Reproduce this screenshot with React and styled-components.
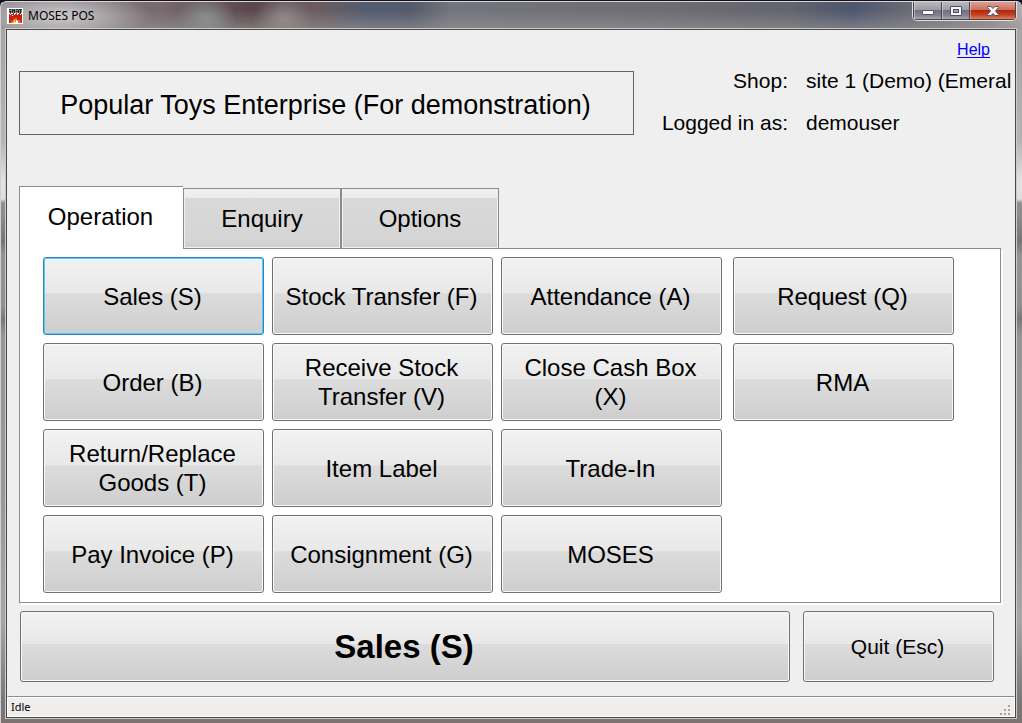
import { useState } from "react";
import styled, { createGlobalStyle, css } from "styled-components";

const TABS = ["Operation", "Enquiry", "Options"];

const MAIN_ACTIONS = [
    "Sales (S)",
    "Stock Transfer (F)",
    "Attendance (A)",
    "Order (B)",
    "Receive Stock Transfer (V)",
    "Close Cash Box (X)",
    "Return/Replace Goods (T)",
    "Item Label",
    "Trade-In",
    "Pay Invoice (P)",
    "Consignment (G)",
    "MOSES",
];

const SIDE_ACTIONS = ["Request (Q)", "RMA"];

const App = () => {
    const [activeTab, setActiveTab] = useState("Operation");
    const [selected, setSelected] = useState("Sales (S)");

    return (
        <Window>
            <GlobalStyle />
            <TitleBar>
                <AppIcon />
                <WindowTitle>MOSES POS</WindowTitle>
                <Captions />
            </TitleBar>
            <Client>
                <Header>
                    <ShopName>
                        Popular Toys Enterprise (For demonstration)
                    </ShopName>
                    <Info>
                        <HelpLink href="#help">Help</HelpLink>
                        <Details>
                            <dt>Shop:</dt>
                            <dd>site 1 (Demo) (Emeral</dd>
                            <dt>Logged in as:</dt>
                            <dd>demouser</dd>
                        </Details>
                    </Info>
                </Header>
                <Tabs role="tablist">
                    {TABS.map((tab) => (
                        <Tab
                            key={tab}
                            role="tab"
                            aria-selected={tab === activeTab}
                            $active={tab === activeTab}
                            onClick={() => setActiveTab(tab)}
                        >
                            {tab}
                        </Tab>
                    ))}
                </Tabs>
                <Panel role="tabpanel">
                    <MainActions>
                        {MAIN_ACTIONS.map((action) => (
                            <ActionButton
                                key={action}
                                $selected={action === selected}
                                onClick={() => setSelected(action)}
                            >
                                {action}
                            </ActionButton>
                        ))}
                    </MainActions>
                    <SideActions>
                        {SIDE_ACTIONS.map((action) => (
                            <ActionButton
                                key={action}
                                $selected={action === selected}
                                onClick={() => setSelected(action)}
                            >
                                {action}
                            </ActionButton>
                        ))}
                    </SideActions>
                </Panel>
                <Footer>
                    <RunButton>{selected}</RunButton>
                    <QuitButton>Quit (Esc)</QuitButton>
                </Footer>
                <StatusBar>
                    Idle
                    <Grip />
                </StatusBar>
            </Client>
        </Window>
    );
};

const AppIcon = () => (
    <svg width="16" height="16" viewBox="0 0 16 16" aria-hidden="true">
        <rect width="16" height="16" fill="#fff" />
        <path d="M2 1h13v4h-13z" fill="#8b8b8b" />
        <path
            d="M2 1h2v1h-2zM5 1h1v4h-1zM7 1h1v4h-1zM9 1h2v1h-2zM12 1h3v1h-3zM2 3h2v1h-2zM3 4h1v1h-1zM6 2h1v1h-1zM9 3h2v1h-2zM11 2h1v3h-1zM13 2h1v3h-1z"
            fill="#222"
        />
        <path d="M2 6h13v9h-13z" fill="#c62412" />
        <path
            d="M3 5h1v1h-1zM6 5h1v1h-1zM9 5h1v1h-1zM12 5h2v1h-2z"
            fill="#a33"
        />
        <path
            d="M3 6h1v1h-1zM5 7h1v1h-1zM7 6h1v1h-1zM10 6h1v1h-1zM13 6h1v1h-1z"
            fill="#fff"
        />
        <path d="M4 15v-2h2v-2h2v-1h2v2h3v2h1v1z" fill="#f0692c" />
        <path d="M6 15v-1h1v-2h1v2h3v1z" fill="#ffd9a0" />
        <path d="M9 12h1v1h1v2h-2z" fill="#fff" />
    </svg>
);

const Captions = () => (
    <CaptionGroup>
        <CaptionButton aria-label="Minimize">
            <svg width="14" height="12" viewBox="0 0 14 12">
                <rect
                    x="1.5"
                    y="5.5"
                    width="11"
                    height="4"
                    rx="0.5"
                    fill="#fff"
                    stroke="#525469"
                />
            </svg>
        </CaptionButton>
        <CaptionButton aria-label="Maximize">
            <svg width="14" height="12" viewBox="0 0 14 12">
                <rect
                    x="1.5"
                    y="1.5"
                    width="11"
                    height="9"
                    rx="0.5"
                    fill="#f5f5f5"
                    stroke="#4c4e62"
                />
                <rect
                    x="4.5"
                    y="4.5"
                    width="5"
                    height="3"
                    fill="#a5a4ae"
                    stroke="#4c4e62"
                />
            </svg>
        </CaptionButton>
        <CaptionButton $close aria-label="Close">
            <svg width="14" height="12" viewBox="0 0 14 12">
                <path
                    d="M1.5 1.5h3.5l2 2 2-2h3.5v1l-3 3.5 3 3.5v1h-3.5l-2-2-2 2h-3.5v-1l3-3.5-3-3.5z"
                    fill="#f7f7f7"
                    stroke="#53546a"
                />
            </svg>
        </CaptionButton>
    </CaptionGroup>
);

const Grip = () => (
    <GripIcon width="11" height="11" viewBox="0 0 11 11" aria-hidden="true">
        <path
            d="M8 0h2v2h-2zM4 4h2v2h-2zM8 4h2v2h-2zM0 8h2v2h-2zM4 8h2v2h-2zM8 8h2v2h-2z"
            fill="#a5a2a1"
        />
    </GripIcon>
);

const GlobalStyle = createGlobalStyle`
    * {
        box-sizing: border-box;
    }

    body {
        margin: 0;
        background-color: #15101a;
        color: #000;
        font-family: "Liberation Sans", Arial, sans-serif;
    }

    button {
        margin: 0;
        padding: 0;
        color: inherit;
        font-family: inherit;
    }
`;

const Window = styled.div`
    display: flex;
    flex-direction: column;
    min-height: 100vh;
    padding: 0 6px 5px 5px;
    border: 1px solid #d3d0d3;
    border-top: 1px solid #17121a;
    border-right: 0;
    border-bottom: 0;
    border-radius: 7px 7px 0 0;
    background: linear-gradient(
        #a8a6a8 0,
        #a9a9a9 60px,
        #b4b6b5 140px,
        #e2e2e2 180px,
        #dedede 198px,
        #8e8f8f 202px,
        #8b8c8c 215px,
        #747575 240px,
        #939594 255px,
        #8f9190 305px,
        #787979 318px,
        #959796 335px,
        #989a99 500px,
        #a6a6a6 620px,
        #777878 700px,
        #7d7370
    );
`;

const TitleBar = styled.header`
    display: flex;
    align-items: center;
    height: 28px;
    margin: 0 -6px 0 -5px;
    padding-left: 6px;
    border-top: 1px solid #d9d5dc;
    border-radius: 6px 6px 0 0;
    background: radial-gradient(
            ellipse 90px 26px at 60px 14px,
            rgba(205, 203, 205, 0.9) 10%,
            transparent
        ),
        radial-gradient(
            ellipse 30px 24px at 205px 17px,
            rgba(143, 150, 148, 0.8) 10%,
            transparent
        ),
        radial-gradient(
            ellipse 30px 24px at 283px 17px,
            rgba(150, 145, 144, 0.8) 10%,
            transparent
        ),
        linear-gradient(transparent 30%, rgba(150, 147, 147, 0.6)),
        linear-gradient(
            90deg,
            #8d888d 0,
            #77696d 160px,
            #5a474b 250px,
            #6c5c60 315px,
            #535c70 365px,
            #535a6b 410px,
            #73757e 450px,
            #6d6d73 660px,
            #62646e 790px,
            #4d566e 850px,
            #6b6b75 910px,
            #958d90 990px,
            #b3aeae 100%
        );
`;

const WindowTitle = styled.h1`
    flex: 1;
    margin: 0 0 0 5px;
    font-family: "Noto Sans", sans-serif;
    font-size: 12px;
    font-weight: 400;
    line-height: 16px;
`;

const CaptionGroup = styled.div`
    display: flex;
    align-self: flex-start;
    height: 19px;
    margin-right: 5px;
    border: 1px solid #e3dfe2;
    border-top: 0;
    border-radius: 0 0 5px 5px;
    overflow: hidden;
`;

const CaptionButton = styled.button`
    display: flex;
    align-items: center;
    justify-content: center;
    width: ${({ $close }) => ($close ? "47px" : "28px")};
    border: 1px solid #46444f;
    border-top: 0;
    border-right-width: ${({ $close }) => ($close ? "1px" : "0")};
    background: ${({ $close }) =>
        $close
            ? "linear-gradient(#dda094, #cb705e 45%, #b5280e 50%, #c63f20 75%, #df8055)"
            : "linear-gradient(#b7b7bd, #9c9ca5 45%, #71727e 50%, #858590 80%, #aaa8af)"};
    box-shadow: inset 1px 0 rgba(255, 255, 255, 0.4);
`;

const Client = styled.main`
    display: flex;
    flex: 1;
    flex-direction: column;
    border: 1px solid #494949;
    background-color: #efefef;
    box-shadow: 0 0 0 1px #cbcbc9;
`;

const Header = styled.div`
    display: flex;
    height: 156px;
`;

const ShopName = styled.div`
    flex: 1;
    height: 64px;
    margin: 41px 0 0 12px;
    padding: 2px 2px 0 0;
    border: 1px solid #646464;
    font-size: 27px;
    line-height: 62px;
    text-align: center;
    white-space: nowrap;
`;

const Info = styled.div`
    display: flex;
    flex-direction: column;
    width: 381px;
    padding-top: 10px;
`;

const HelpLink = styled.a`
    align-self: flex-end;
    margin-right: 25px;
    color: #0000ff;
    font-size: 16px;
    line-height: 20px;
    text-decoration-skip-ink: none;
    text-underline-offset: 2px;
`;

const Details = styled.dl`
    display: grid;
    grid-template-columns: 154px 1fr;
    column-gap: 18px;
    margin: 0;
    font-size: 21px;
    line-height: 42px;

    dt {
        text-align: right;
    }

    dd {
        margin: 0;
        white-space: nowrap;
    }
`;

const Tabs = styled.div`
    display: flex;
    align-items: flex-end;
    padding-left: 12px;
`;

const Tab = styled.button`
    width: 158px;
    height: 60px;
    border: 1px solid #898c95;
    border-bottom: 0;
    background: linear-gradient(
        #f2f2f2,
        #ebebeb 15%,
        #d9d9d9 16%,
        #d5d5d5 85%,
        #cdcdcd
    );
    box-shadow: inset 0 0 0 1px #f0f0f0;
    font-size: 24px;

    ${({ $active }) =>
        $active &&
        css`
            position: relative;
            width: 164px;
            height: 63px;
            margin-bottom: -1px;
            padding: 0 2px 2px 0;
            border-right: 0;
            background: #fff;
            box-shadow: none;
        `}
`;

const Panel = styled.section`
    display: flex;
    gap: 11px;
    margin: 0 14px 0 12px;
    padding: 8px 46px 9px 23px;
    border: 1px solid #898c95;
    background-color: #fff;
    box-shadow: 2px 2px #fff;
`;

const MainActions = styled.div`
    display: grid;
    flex: 3 1 16px;
    grid-template-columns: repeat(3, minmax(0, 1fr));
    grid-auto-rows: 78px;
    gap: 8px;
`;

const SideActions = styled.div`
    display: grid;
    flex: 1 1 0;
    grid-auto-rows: 78px;
    align-content: start;
    gap: 8px;
`;

const PushButton = styled.button`
    border: 1px solid #707070;
    border-radius: 3px;
    background: linear-gradient(
        #f2f2f2,
        #e8e8e8 46%,
        #dcdcdc 47%,
        #cecece
    );
    box-shadow: inset 0 0 0 1px #f9f9f9;
`;

const ActionButton = styled(PushButton)`
    padding: 0 12px 0 10px;
    font-size: 24px;
    line-height: 29px;

    ${({ $selected }) =>
        $selected &&
        css`
            border-color: #3c7fb1;
            box-shadow: inset 0 0 0 1px #48d0f5;
        `}
`;

const Footer = styled.div`
    display: flex;
    gap: 13px;
    margin: 8px 21px 14px 13px;
`;

const RunButton = styled(PushButton)`
    flex: 1;
    height: 71px;
    padding-right: 2px;
    font-size: 33px;
    font-weight: 700;
`;

const QuitButton = styled(PushButton)`
    width: 191px;
    height: 71px;
    padding-right: 2px;
    font-size: 21px;
`;

const StatusBar = styled.footer`
    display: flex;
    align-items: center;
    justify-content: space-between;
    height: 21px;
    margin-top: auto;
    padding: 0 3px;
    border: 1px solid #fff;
    border-top-color: #8e8e8e;
    background-color: #f1edec;
    box-shadow: inset 0 1px #fff;
    font-family: "Noto Sans", sans-serif;
    font-size: 11px;
`;

const GripIcon = styled.svg`
    align-self: flex-end;
`;

export default App;
